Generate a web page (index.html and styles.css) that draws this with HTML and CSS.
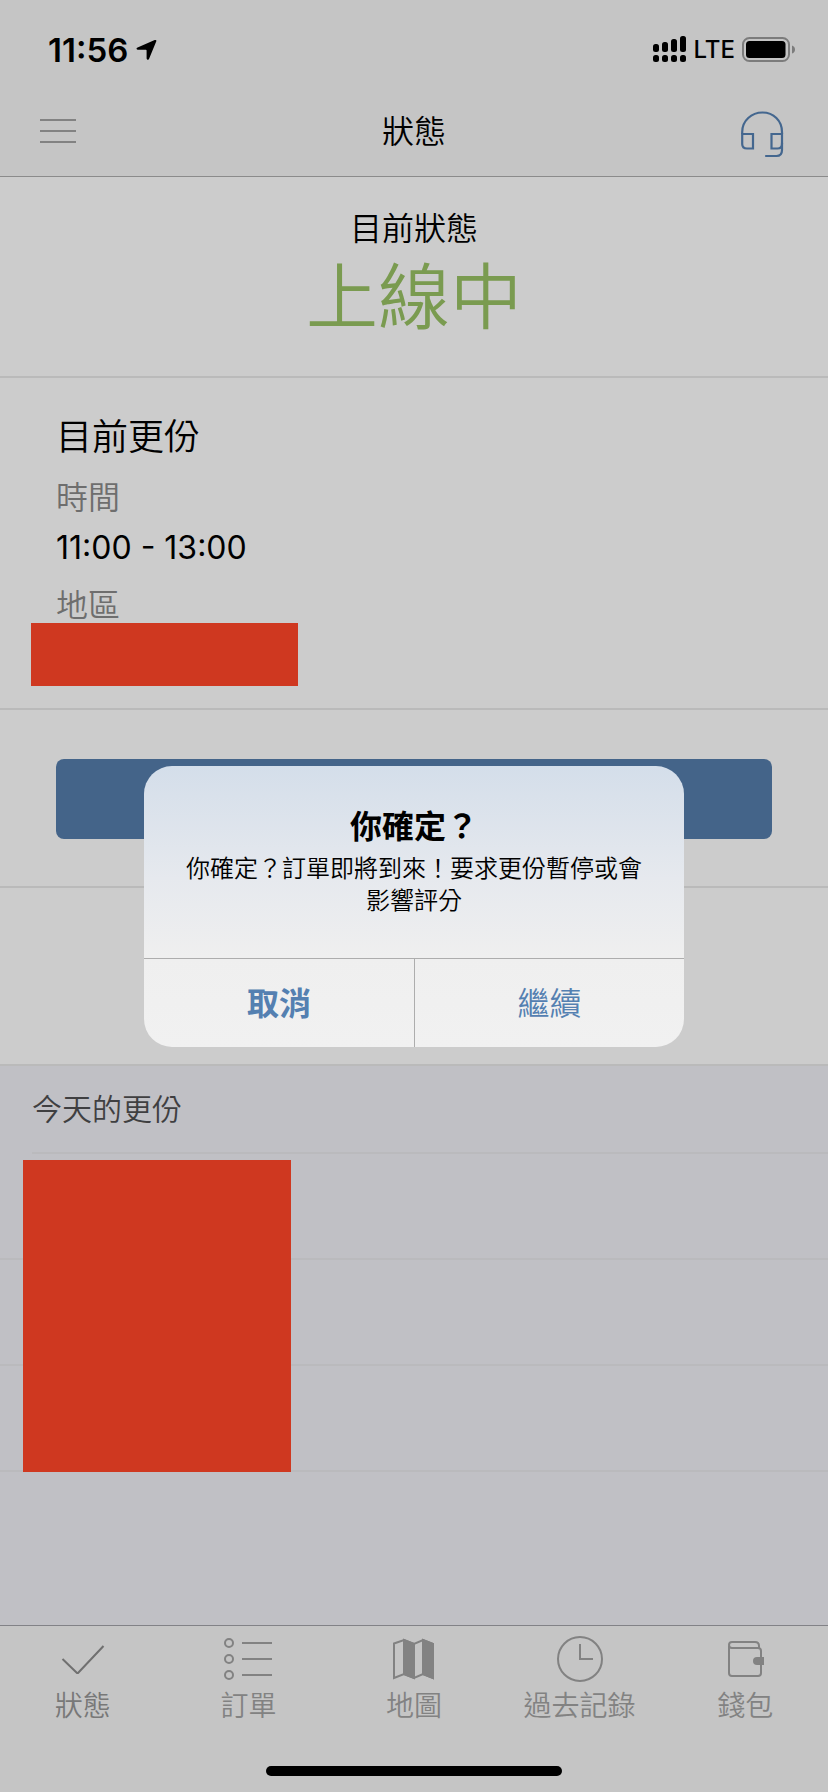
FILE: index.html
```html
<!DOCTYPE html>
<html lang="zh-Hant">
<head>
<meta charset="utf-8">
<meta name="viewport" content="width=device-width, initial-scale=1">
<title>狀態</title>
<link rel="stylesheet" href="styles.css">
</head>
<body>
<div class="app">
  <header class="top">
    <div class="statusbar">
      <div class="clock">
        <span>11:56</span>
        <svg width="21" height="22" viewBox="0 0 21 22" aria-hidden="true"><path d="M1.600 8.600 18.700 1.100Q20.900.4 20.200 2.600L13 19.900Q11.300 22 10.600 19.500V11.500Q10.600 10.700 9.800 10.700H1.600Q-.6 9.900 1.600 8.600Z"/></svg>
      </div>
      <div class="signals">
        <svg width="34" height="29" viewBox="0 0 34 29" aria-hidden="true"><g><rect x="0" y="8" width="6" height="8" rx="2.500"/><rect x="9" y="6" width="6" height="10" rx="2.500"/><rect x="18" y="3" width="6" height="13" rx="2.500"/><rect x="27" y="0" width="6" height="16" rx="2.500"/><rect x="0" y="19" width="6" height="7" rx="2.500"/><rect x="9" y="19" width="6" height="7" rx="2.500"/><rect x="18" y="19" width="6" height="7" rx="2.500"/><rect x="27" y="19" width="6" height="7" rx="2.500"/></g></svg>
        <span class="carrier">LTE</span>
        <svg width="54" height="26" viewBox="0 0 54 26" aria-hidden="true"><rect x="1" y="1" width="46" height="23" rx="6.500" fill="none" stroke="#7c7c7c" stroke-width="2"/><rect x="4" y="4" width="39.500" height="17" rx="3.500"/><path d="M50 8.500Q53 9.500 53 12.500T50 16.500Z" fill="#7c7c7c"/></svg>
      </div>
    </div>
    <div class="navbar">
      <button class="icon-button" type="button" aria-label="選單">
        <svg width="36" height="28" viewBox="0 0 36 28"><path d="M0 2H36M0 13H36M0 24H36" stroke="#828282" stroke-width="2"/></svg>
      </button>
      <h1 class="title">狀態</h1>
      <button class="icon-button support" type="button" aria-label="客戶支援">
        <svg width="48" height="52" viewBox="-1 -5 48 52" fill="none" stroke="#44678f" stroke-width="2.200"><path d="M1.200 23V21C1.200 9.500 10.500 1.500 21.500 1.500S41 9.500 41 21V23"/><path d="M1.200 23H12V37.500H6Q1.200 37.500 1.200 33ZM41 23H30.500V37.500H36.500Q41 37.500 41 33Z"/><path d="M41 32V39Q41 45 35.500 45H25" stroke-linecap="round"/></svg>
      </button>
    </div>
  </header>

  <main class="content">
    <section class="current">
      <p class="current-label">目前狀態</p>
      <p class="current-value">上線中</p>
    </section>
    <section class="shift">
      <h2 class="shift-title">目前更份</h2>
      <dl class="details">
        <dt>時間</dt>
        <dd>11:00 - 13:00</dd>
        <dt>地區</dt>
        <dd class="redacted"></dd>
      </dl>
    </section>
    <section class="action">
      <button class="primary" type="button" aria-label="要求暫停"></button>
    </section>
    <section class="spare"></section>
    <section class="today">
      <h2 class="today-title">今天的更份</h2>
      <div class="shifts">
        <ul class="shift-list">
          <li></li>
          <li></li>
          <li></li>
        </ul>
        <div class="mask"></div>
      </div>
    </section>
  </main>

  <nav class="tabbar">
    <div class="tabs">
      <a class="tab active" href="#status">
        <svg width="48" height="48" viewBox="0 0 48 48" fill="none" stroke="#707070" stroke-width="2"><path d="M3.500 24 18 38H19L44.500 11" stroke-linejoin="round"/></svg>
        <span>狀態</span>
      </a>
      <a class="tab" href="#orders">
        <svg width="48" height="48" viewBox="0 0 48 48" fill="none" stroke="#828282" stroke-width="2"><circle cx="5" cy="8" r="4"/><circle cx="5" cy="24" r="4"/><circle cx="5" cy="40" r="4"/><path d="M18 8H48M18 24H48M18 40H48"/></svg>
        <span>訂單</span>
      </a>
      <a class="tab" href="#map">
        <svg width="48" height="48" viewBox="0 0 48 48" fill="none" stroke="#828282" stroke-width="2"><path d="M4 8.500 14 5 24 9 33 5 43 9V43L33 39 24 43 14 39 4 43Z"/><path d="M14 5 24 9V43L14 39ZM33 5 43 9V43L33 39Z" fill="#828282"/></svg>
        <span>地圖</span>
      </a>
      <a class="tab" href="#history">
        <svg width="48" height="48" viewBox="0 0 48 48" fill="none" stroke="#828282" stroke-width="2"><circle cx="24" cy="24" r="22"/><path d="M24 9V24H37"/></svg>
        <span>過去記錄</span>
      </a>
      <a class="tab" href="#wallet">
        <svg width="48" height="48" viewBox="0 0 48 48" fill="none" stroke="#828282" stroke-width="2"><path d="M8 11V38Q8 41 11 41H37Q40 41 40 38V16Q40 13 37 13H11Q8 13 8 10Q8 7 11 7H34Q38 7 38 11V13"/><path d="M43 22V30H36A4 4 0 0 1 36 22Z" fill="#828282" stroke="none"/></svg>
        <span>錢包</span>
      </a>
    </div>
    <div class="home-indicator"></div>
  </nav>

  <div class="overlay">
    <div class="alert" role="alertdialog" aria-labelledby="alert-title" aria-describedby="alert-text">
      <div class="alert-body">
        <h2 class="alert-title" id="alert-title">你確定？</h2>
        <p class="alert-text" id="alert-text">你確定？訂單即將到來！要求更份暫停或會影響評分</p>
      </div>
      <div class="alert-actions">
        <button class="alert-button cancel" type="button">取消</button>
        <button class="alert-button" type="button">繼續</button>
      </div>
    </div>
  </div>
</div>
</body>
</html>
```

FILE: styles.css
```css
* {
  box-sizing: border-box;
}

body,
h1,
h2,
p,
dl,
dd,
ul {
  margin: 0;
  padding: 0;
}

body {
  background: #cccccc;
  color: #000000;
  font-family: Inter, "Noto Sans CJK TC", sans-serif;
  font-size: 32px;
  font-weight: 350;
}

button {
  margin: 0;
  padding: 0;
  border: 0;
  background: none;
  font: inherit;
}

svg {
  display: block;
  flex: none;
}

.app {
  position: relative;
  display: flex;
  flex-direction: column;
  min-height: 100vh;
}

.top {
  background: #c5c5c5;
  border-bottom: 1px solid #8b8b8b;
}

.statusbar {
  display: flex;
  justify-content: space-between;
  align-items: center;
  height: 88px;
  padding: 12px 32px 0 48px;
}

.clock {
  display: flex;
  align-items: center;
  gap: 8px;
  font-size: 33px;
  font-weight: 600;
  line-height: 40px;
}

.signals {
  display: flex;
  align-items: center;
  gap: 7px;
}

.carrier {
  font-size: 24px;
  font-weight: 500;
  line-height: 32px;
}

.navbar {
  display: grid;
  grid-template-columns: 1fr auto 1fr;
  align-items: center;
  height: 88px;
  padding: 0 40px;
}

.icon-button {
  justify-self: start;
}

.support {
  justify-self: end;
}

.title {
  font-size: 32px;
  font-weight: 350;
  line-height: 48px;
}

.content {
  display: flex;
  flex: 1;
  flex-direction: column;
}

.current,
.shift,
.action,
.spare {
  border-bottom: 2px solid #bababa;
}

.current {
  padding: 28px 0 36px;
  text-align: center;
}

.current-label {
  line-height: 48px;
}

.current-value {
  color: #7a9b50;
  font-size: 72px;
  line-height: 87px;
}

.shift {
  padding: 31px 56px 22px;
}

.shift-title {
  font-size: 36px;
  font-weight: 350;
  line-height: 56px;
}

.details {
  padding-top: 6px;
}

.details dt {
  color: #6e6e6e;
  line-height: 54px;
}

.details dd {
  font-weight: 400;
  line-height: 46px;
}

.details dd + dt {
  padding-top: 8px;
}

.details .redacted {
  width: 267px;
  height: 63px;
  margin: -10px 0 0 -25px;
  background: #cf3820;
}

.action {
  padding: 49px 56px 47px;
}

.primary {
  display: block;
  width: 100%;
  height: 80px;
  border-radius: 8px;
  background: #446489;
}

.spare {
  height: 178px;
}

.today {
  flex: 1;
  background: #c0c0c5;
}

.today-title {
  padding: 20px 32px;
  color: #3f3f41;
  font-size: 30px;
  font-weight: 350;
  line-height: 46px;
}

.shifts {
  position: relative;
}

.shifts::before {
  display: block;
  height: 2px;
  margin-left: 32px;
  background: #bababd;
  content: "";
}

.shift-list {
  list-style: none;
}

.shift-list li {
  height: 106px;
  border-bottom: 2px solid #bababd;
}

.mask {
  position: absolute;
  top: 8px;
  bottom: 0;
  left: 23px;
  width: 268px;
  background: #cf3820;
}

.tabbar {
  padding: 9px 0 16px;
  border-top: 1px solid #828287;
  background: #c5c5c5;
}

.tabs {
  display: grid;
  grid-template-columns: repeat(5, 1fr);
}

.tab {
  display: flex;
  flex-direction: column;
  align-items: center;
  color: #828282;
  font-size: 28px;
  line-height: 46px;
  text-decoration: none;
}

.tab.active {
  color: #787878;
}

.home-indicator {
  width: 296px;
  height: 10px;
  margin: 37px auto 0;
  border-radius: 5px;
  background: #000000;
}

.overlay {
  position: absolute;
  inset: 0;
  display: flex;
  align-items: center;
  justify-content: center;
  padding-top: 21px;
}

.alert {
  overflow: hidden;
  width: 540px;
  border-radius: 28px;
  background: linear-gradient(#d4deea, #e6e9ee 40%, #efefef 68%, #f1f1f1);
}

.alert-body {
  padding: 37px 36px 41px;
  text-align: center;
}

.alert-title {
  font-size: 32px;
  font-weight: 600;
  line-height: 48px;
}

.alert-text {
  margin-top: 2px;
  font-size: 24px;
  line-height: 32px;
}

.alert-actions {
  display: grid;
  grid-template-columns: 1fr 1fr;
  border-top: 1px solid #adadad;
}

.alert-button {
  height: 88px;
  padding-bottom: 4px;
  color: #5480b1;
}

.alert-button + .alert-button {
  border-left: 1px solid #adadad;
}

.cancel {
  font-weight: 600;
}
```
